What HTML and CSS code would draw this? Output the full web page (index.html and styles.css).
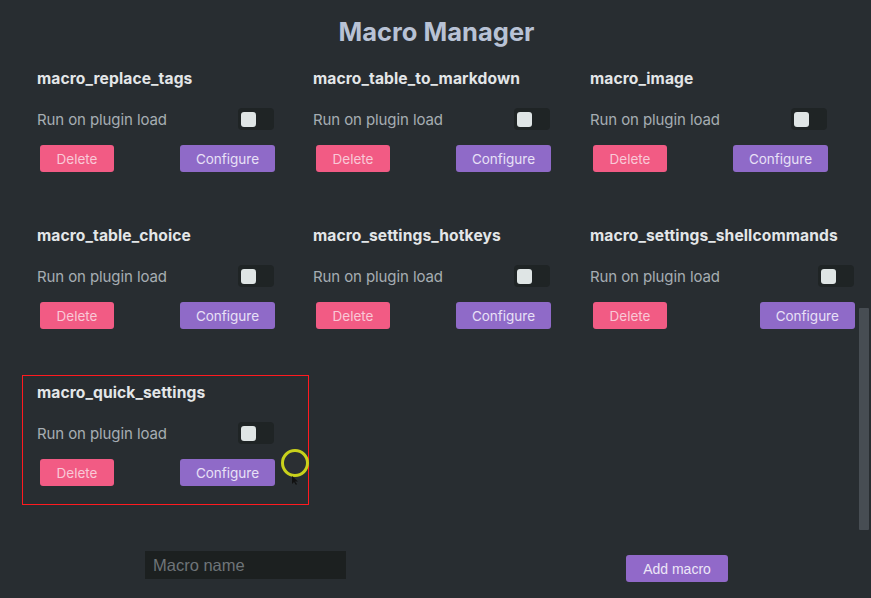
FILE: index.html
```html
<!DOCTYPE html>
<html>
<head>
<meta charset="utf-8">
<link rel="stylesheet" href="styles.css">
</head>
<body>
<div class="page">
  <h1 class="heading">Macro Manager</h1>
  <div class="grid">
    <div class="card">
      <div class="name">macro_replace_tags</div>
      <div class="setting"><span class="label">Run on plugin load</span><span class="toggle"><span class="knob"></span></span></div>
      <div class="actions"><button class="btn delete">Delete</button><button class="btn configure">Configure</button></div>
    </div>
    <div class="card">
      <div class="name">macro_table_to_markdown</div>
      <div class="setting"><span class="label">Run on plugin load</span><span class="toggle"><span class="knob"></span></span></div>
      <div class="actions"><button class="btn delete">Delete</button><button class="btn configure">Configure</button></div>
    </div>
    <div class="card">
      <div class="name">macro_image</div>
      <div class="setting"><span class="label">Run on plugin load</span><span class="toggle"><span class="knob"></span></span></div>
      <div class="actions"><button class="btn delete">Delete</button><button class="btn configure">Configure</button></div>
    </div>
    <div class="card">
      <div class="name">macro_table_choice</div>
      <div class="setting"><span class="label">Run on plugin load</span><span class="toggle"><span class="knob"></span></span></div>
      <div class="actions"><button class="btn delete">Delete</button><button class="btn configure">Configure</button></div>
    </div>
    <div class="card">
      <div class="name">macro_settings_hotkeys</div>
      <div class="setting"><span class="label">Run on plugin load</span><span class="toggle"><span class="knob"></span></span></div>
      <div class="actions"><button class="btn delete">Delete</button><button class="btn configure">Configure</button></div>
    </div>
    <div class="card">
      <div class="name">macro_settings_shellcommands</div>
      <div class="setting"><span class="label">Run on plugin load</span><span class="toggle"><span class="knob"></span></span></div>
      <div class="actions"><button class="btn delete">Delete</button><button class="btn configure">Configure</button></div>
    </div>
    <div class="card highlighted">
      <div class="name">macro_quick_settings</div>
      <div class="setting"><span class="label">Run on plugin load</span><span class="toggle"><span class="knob"></span></span></div>
      <div class="actions"><button class="btn delete">Delete</button><button class="btn configure">Configure</button></div>
      <div class="annotation"></div>
      <div class="cursor-ring"></div>
      <svg class="pointer" width="6" height="9" viewBox="0 0 6 9"><path d="M0 0 L0 8 L2 6 L4 9 L5 8 L3 5.5 L6 5.5 Z" fill="#111"/></svg>
    </div>
  </div>
  <div class="add-row">
    <input class="name-input" type="text" placeholder="Macro name">
    <button class="btn add">Add macro</button>
  </div>
  <div class="scroll-thumb"></div>
</div>
</body>
</html>
```
FILE: styles.css
```css
* { box-sizing: border-box; }
html, body { margin: 0; padding: 0; }
body {
  background: #282d31;
  width: 871px;
  height: 598px;
  overflow: hidden;
  font-family: Inter, "Noto Sans", sans-serif;
}
.page {
  position: relative;
  height: 598px;
  padding-top: 15px;
}
.heading {
  margin: 0;
  text-align: center;
  font-size: 25.5px;
  line-height: 34px;
  font-weight: 700;
  color: #b8c2d5;
  letter-spacing: 0;
  padding-left: 2px;
}
.grid {
  display: grid;
  grid-template-columns: 276px 277px auto;
  row-gap: 54px;
  padding-left: 37px;
  margin-top: 20px;
  align-items: start;
}
.card {
  position: relative;
  display: flex;
  flex-direction: column;
  width: max-content;
  min-width: 238px;
}
.name {
  font-size: 15.6px;
  line-height: 20px;
  font-weight: 700;
  color: #e3e6e8;
  padding-right: 17px;
  letter-spacing: 0.1px;
}
.setting {
  margin-top: 19px;
  height: 22px;
  display: flex;
  align-items: center;
  justify-content: space-between;
}
.label {
  font-size: 15px;
  color: #a6adb3;
  letter-spacing: -0.1px;
}
.toggle {
  width: 36px;
  height: 22px;
  margin-right: 1px;
  border-radius: 4px;
  background: #1f2425;
  display: flex;
  align-items: center;
  padding-left: 3px;
}
.knob {
  width: 15px;
  height: 15px;
  border-radius: 3px;
  background: #dfe5e5;
}
.actions {
  margin-top: 15px;
  display: flex;
  justify-content: space-between;
  align-items: center;
}
.btn {
  border: none;
  height: 27px;
  border-radius: 3px;
  font-family: Inter, "Noto Sans", sans-serif;
  font-size: 13.5px;
  padding: 0;
  cursor: pointer;
}
.delete {
  margin-left: 3px;
  width: 74px;
  background: #f25b84;
  color: #f9c9d7;
}
.configure {
  width: 95px;
  background: #8f6ac8;
  color: #e8e0f6;
}
.annotation {
  position: absolute;
  left: -15px;
  top: -8px;
  width: 287px;
  height: 130px;
  border: 1.5px solid #ff1a1f;
  pointer-events: none;
}
.cursor-ring {
  position: absolute;
  left: 244px;
  top: 66px;
  width: 28px;
  height: 28px;
  border-radius: 50%;
  border: 3px solid #c9d11c;
  background: #2b2f33;
}
.pointer {
  position: absolute;
  left: 255px;
  top: 93px;
}
.add-row {
  display: flex;
  align-items: flex-start;
  margin-top: 65px;
  padding-left: 145px;
}
.name-input {
  width: 201px;
  height: 28px;
  border: none;
  outline: none;
  background: #1c2020;
  padding: 0 8px;
  font-family: "Liberation Sans", Arial, sans-serif;
  font-size: 16.5px;
  color: #d0d4d6;
}
.name-input::placeholder { color: #6e7478; }
.add {
  margin-left: 280px;
  margin-top: 4px;
  width: 102px;
  background: #9169c9;
  color: #ece6f7;
  font-family: "Liberation Sans", Arial, sans-serif;
  font-size: 14px;
}
.scroll-thumb {
  position: absolute;
  left: 859px;
  top: 308px;
  width: 10px;
  height: 222px;
  background: #474d53;
  border-radius: 1px;
}
```
